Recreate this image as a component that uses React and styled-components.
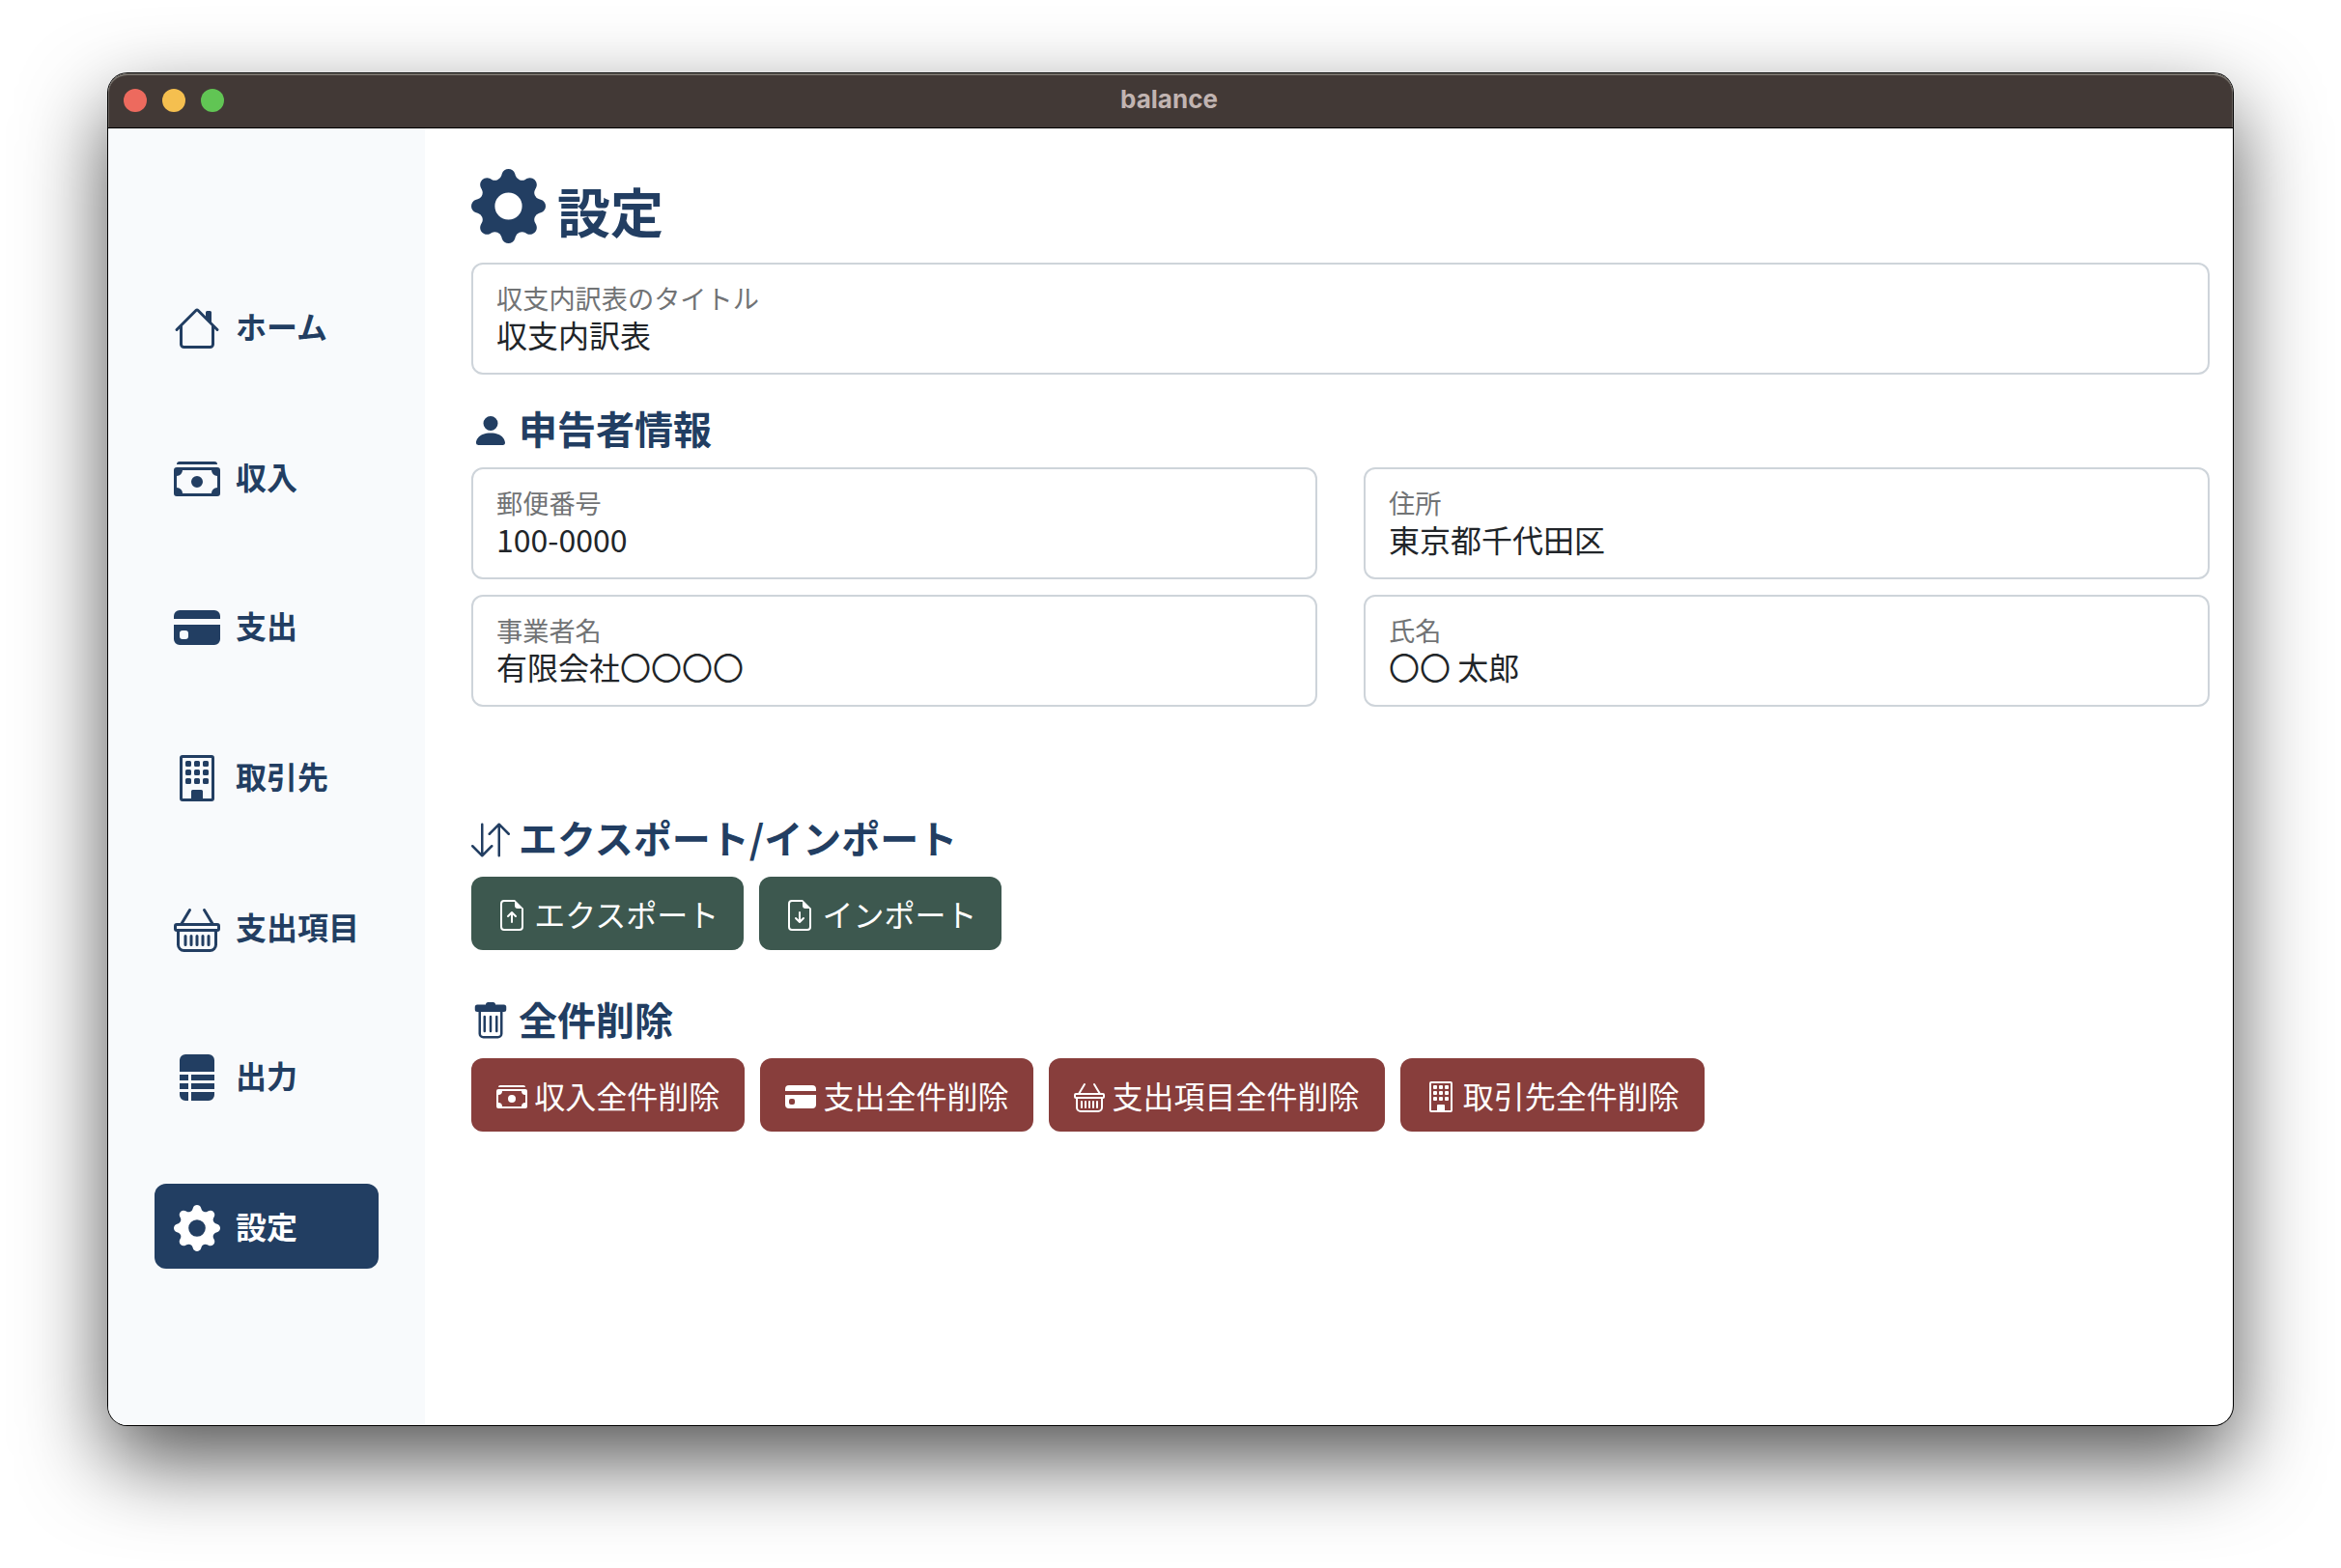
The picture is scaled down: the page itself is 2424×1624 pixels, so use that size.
import React from "react";
import styled, { createGlobalStyle } from "styled-components";
import {
  BsHouse,
  BsCashStack,
  BsCreditCardFill,
  BsBuilding,
  BsBasket,
  BsFileRuledFill,
  BsGearFill,
  BsPersonFill,
  BsArrowDownUp,
  BsFileEarmarkArrowUp,
  BsFileEarmarkArrowDown,
} from "react-icons/bs";

const GlobalStyle = createGlobalStyle`
  *, *::before, *::after { box-sizing: border-box; }
  body {
    margin: 0;
    background: #fff;
    font-family: "Noto Sans CJK JP", sans-serif;
    color: #212529;
  }
  svg { display: block; flex: none; }
`;

const Desktop = styled.div`
  width: 2424px;
  height: 1624px;
  padding: 76px 112px 0;
  overflow: hidden;
`;

const Window = styled.div`
  display: flex;
  flex-direction: column;
  width: 2200px;
  height: 1400px;
  border-radius: 20px;
  overflow: hidden;
  background: #fff;
  box-shadow: 0 0 0 1px #000, 0 36px 88px rgba(0, 0, 0, 0.68);
`;

const TitleBar = styled.header`
  display: grid;
  grid-template-columns: 1fr auto 1fr;
  align-items: center;
  height: 57px;
  flex: none;
  padding: 0 19px 0 16px;
  border-radius: 20px 20px 0 0;
  background: #423936;
  border-bottom: 1px solid #000;
  box-shadow: inset 0 2px 0 #76716a, inset 1px 0 0 #6b6561, inset -1px 0 0 #6b6561;
`;

const Lights = styled.div`
  display: flex;
  gap: 16px;
`;

const Light = styled.span`
  width: 24px;
  height: 24px;
  border-radius: 50%;
  background: ${(p) => p.$color};
`;

const WindowTitle = styled.div`
  margin-top: -2px;
  font: 700 26px/30px Inter, sans-serif;
  color: #c1b4b1;
`;

const Body = styled.div`
  display: flex;
  flex: 1;
`;

const Sidebar = styled.nav`
  display: flex;
  flex-direction: column;
  gap: 68px;
  width: 328px;
  padding: 161px 48px 0;
  background: #f8fafc;
`;

const NavItem = styled.a`
  display: flex;
  align-items: center;
  gap: 16px;
  height: 88px;
  padding: 4px 20px 0;
  border-radius: 12px;
  font-size: 32px;
  line-height: 48px;
  font-weight: 700;
  white-space: nowrap;
  color: ${(p) => (p.$active ? "#fff" : "#223e62")};
  background: ${(p) => (p.$active ? "#223e62" : "transparent")};

  &:nth-child(3n + 2) { margin-bottom: -2px; }
`;

const NavLabel = styled.span`
  margin-top: -6px;
`;

const Main = styled.main`
  flex: 1;
  padding: 36px 24px 0 48px;
`;

const PageTitle = styled.h1`
  display: flex;
  gap: 12px;
  height: 103px;
  margin: 0;
  padding-top: 6px;
  font-size: 55px;
  line-height: 85px;
  font-weight: 700;
  color: #223e62;
`;

const SectionTitle = styled.h2`
  display: flex;
  align-items: center;
  gap: 9px;
  height: 60px;
  margin: ${(p) => p.$top}px 0 8px;
  font-size: 40px;
  line-height: 60px;
  font-weight: 700;
  color: #223e62;

  span { margin-top: -7px; }
`;

const FieldGrid = styled.div`
  display: grid;
  grid-template-columns: repeat(${(p) => p.$columns}, 1fr);
  gap: 16px 48px;
`;

const Field = styled.div`
  height: 116px;
  padding: 14px 24px;
  border: 2px solid #ced4da;
  border-radius: 12px;
`;

const FieldLabel = styled.div`
  font-size: 27.2px;
  line-height: 40px;
  color: #717375;
`;

const FieldValue = styled.div`
  font-size: 32px;
  line-height: 36px;
`;

const ButtonRow = styled.div`
  display: flex;
  gap: 16px;
`;

const Button = styled.button`
  display: flex;
  align-items: center;
  gap: 7.2px;
  height: 76px;
  padding: 0 26px;
  border: 0;
  border-radius: 12px;
  font: 400 32px/48px "Noto Sans CJK JP", sans-serif;
  color: #fff;
  background: ${(p) => (p.$danger ? "#883e3c" : "#3d584f")};

  svg { margin-top: 4px; }
`;

const TrashIcon = ({ size }) => (
  <svg width={size} height={size} viewBox="0 0 16 16" fill="currentColor">
    <path d="M5.5 5.5A.5.5 0 0 1 6 6v6a.5.5 0 0 1-1 0V6a.5.5 0 0 1 .5-.5m2.5 0a.5.5 0 0 1 .5.5v6a.5.5 0 0 1-1 0V6a.5.5 0 0 1 .5-.5m3 .5a.5.5 0 0 0-1 0v6a.5.5 0 0 0 1 0z" />
    <path d="M14.5 3a1 1 0 0 1-1 1H13v9a2 2 0 0 1-2 2H5a2 2 0 0 1-2-2V4h-.5a1 1 0 0 1-1-1V2a1 1 0 0 1 1-1H6a1 1 0 0 1 1-1h2a1 1 0 0 1 1 1h3.5a1 1 0 0 1 1 1zM4 4v9a1 1 0 0 0 1 1h6a1 1 0 0 0 1-1V4z" />
  </svg>
);

const navItems = [
  { icon: BsHouse, label: "ホーム" },
  { icon: BsCashStack, label: "収入" },
  { icon: BsCreditCardFill, label: "支出" },
  { icon: BsBuilding, label: "取引先" },
  { icon: BsBasket, label: "支出項目" },
  { icon: BsFileRuledFill, label: "出力" },
  { icon: BsGearFill, label: "設定", active: true },
];

const applicant = [
  ["郵便番号", "100-0000"],
  ["住所", "東京都千代田区"],
  ["事業者名", "有限会社〇〇〇〇"],
  ["氏名", "〇〇 太郎"],
];

const deletions = [
  [BsCashStack, "収入全件削除"],
  [BsCreditCardFill, "支出全件削除"],
  [BsBasket, "支出項目全件削除"],
  [BsBuilding, "取引先全件削除"],
];

const TextField = ({ label, value }) => (
  <Field>
    <FieldLabel>{label}</FieldLabel>
    <FieldValue>{value}</FieldValue>
  </Field>
);

export default function App() {
  return (
    <>
      <GlobalStyle />
      <Desktop>
        <Window>
          <TitleBar>
            <Lights>
              <Light $color="#ed6a5e" />
              <Light $color="#f5bf4f" />
              <Light $color="#61c554" />
            </Lights>
            <WindowTitle>balance</WindowTitle>
          </TitleBar>
          <Body>
            <Sidebar>
              {navItems.map(({ icon: Icon, label, active }) => (
                <NavItem key={label} $active={active}>
                  <Icon size={48} />
                  <NavLabel>{label}</NavLabel>
                </NavItem>
              ))}
            </Sidebar>
            <Main>
              <PageTitle>
                <BsGearFill size={77} />
                <span>設定</span>
              </PageTitle>
              <FieldGrid $columns={1}>
                <TextField label="収支内訳表のタイトル" value="収支内訳表" />
              </FieldGrid>
              <SectionTitle $top={28}>
                <BsPersonFill size={40} />
                <span>申告者情報</span>
              </SectionTitle>
              <FieldGrid $columns={2}>
                {applicant.map(([label, value]) => (
                  <TextField key={label} label={label} value={value} />
                ))}
              </FieldGrid>
              <SectionTitle $top={108}>
                <BsArrowDownUp size={40} />
                <span>エクスポート/インポート</span>
              </SectionTitle>
              <ButtonRow>
                <Button>
                  <BsFileEarmarkArrowUp size={32} />
                  <span>エクスポート</span>
                </Button>
                <Button>
                  <BsFileEarmarkArrowDown size={32} />
                  <span>インポート</span>
                </Button>
              </ButtonRow>
              <SectionTitle $top={44}>
                <TrashIcon size={40} />
                <span>全件削除</span>
              </SectionTitle>
              <ButtonRow>
                {deletions.map(([Icon, label]) => (
                  <Button key={label} $danger>
                    <Icon size={32} />
                    <span>{label}</span>
                  </Button>
                ))}
              </ButtonRow>
            </Main>
          </Body>
        </Window>
      </Desktop>
    </>
  );
}
